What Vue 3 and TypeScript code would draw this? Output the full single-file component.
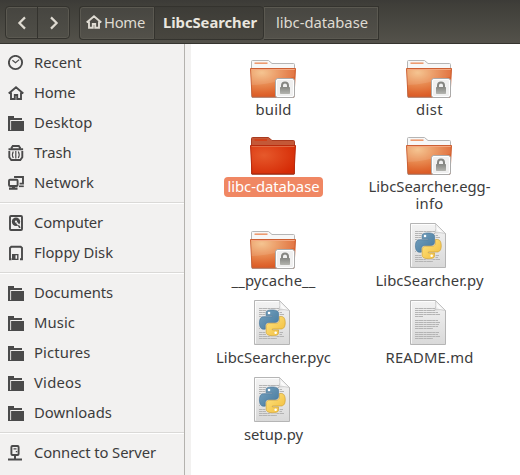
<script setup lang="ts">
type PlaceIcon = 'recent' | 'home' | 'folder' | 'trash' | 'network' | 'disk' | 'floppy' | 'server'

interface Place {
  name: string
  icon: PlaceIcon
  width: number
}

interface LabelLine {
  text: string
  width: number
}

interface FileItem {
  lines: LabelLine[]
  kind: 'folder' | 'python' | 'text'
  locked?: boolean
  selected?: boolean
}

const groups: Place[][] = [
  [
    { name: 'Recent', icon: 'recent', width: 47.5 },
    { name: 'Home', icon: 'home', width: 41.5 },
    { name: 'Desktop', icon: 'folder', width: 58.5 },
    { name: 'Trash', icon: 'trash', width: 37.5 },
    { name: 'Network', icon: 'network', width: 60 },
  ],
  [
    { name: 'Computer', icon: 'disk', width: 69 },
    { name: 'Floppy Disk', icon: 'floppy', width: 79 },
  ],
  [
    { name: 'Documents', icon: 'folder', width: 79 },
    { name: 'Music', icon: 'folder', width: 41 },
    { name: 'Pictures', icon: 'folder', width: 56.5 },
    { name: 'Videos', icon: 'folder', width: 47.5 },
    { name: 'Downloads', icon: 'folder', width: 78 },
  ],
  [{ name: 'Connect to Server', icon: 'server', width: 122 }],
]

const files: FileItem[] = [
  { lines: [{ text: 'build', width: 36 }], kind: 'folder', locked: true },
  { lines: [{ text: 'dist', width: 27 }], kind: 'folder', locked: true },
  { lines: [{ text: 'libc-database', width: 92 }], kind: 'folder', selected: true },
  {
    lines: [
      { text: 'LibcSearcher.egg-', width: 122 },
      { text: 'info', width: 28 },
    ],
    kind: 'folder',
    locked: true,
  },
  { lines: [{ text: '__pycache__', width: 84 }], kind: 'folder', locked: true },
  { lines: [{ text: 'LibcSearcher.py', width: 108 }], kind: 'python' },
  { lines: [{ text: 'LibcSearcher.pyc', width: 115 }], kind: 'python' },
  { lines: [{ text: 'README.md', width: 88 }], kind: 'text' },
  { lines: [{ text: 'setup.py', width: 59 }], kind: 'python' },
]

const textRows = [8.5, 10.5, 12.5, 14.5, 16.5, 20.5, 22.5, 24.5, 26.5, 28.5, 32.5, 34.5, 36.5, 38.5]
const rowEnd = (i: number): number => (i < 2 ? 30 : i === 4 ? 18 : i === 9 || i === 13 ? 28 : 35 - (i % 3))

// Tracks a label so that it occupies the given advance width.
const vFit = {
  mounted(el: HTMLElement, binding: { value: number }) {
    const natural = el.getBoundingClientRect().width
    const count = (el.textContent ?? '').length
    el.style.letterSpacing = `${(binding.value - natural) / count}px`
  },
}

const snake =
  'M14.25.18l.9.2.73.26.59.3.45.32.34.34.25.34.16.33.1.3.04.26.02.2-.01.13V8.5l-.05.63-.13.55-.21.46-.26.38-.3.31-.33.25-.35.19-.35.14-.33.1-.3.07-.26.04-.21.02H8.77l-.69.05-.59.14-.5.22-.41.27-.33.32-.27.35-.2.36-.15.37-.1.35-.07.32-.04.27-.02.21v3.06H3.17l-.21-.03-.28-.07-.32-.12-.35-.18-.36-.26-.36-.36-.35-.46-.32-.59-.28-.73-.21-.88-.14-1.05-.05-1.23.06-1.22.16-1.04.24-.87.32-.71.36-.57.4-.44.42-.33.42-.24.4-.16.36-.1.32-.05.24-.01h.16l.06.01h8.16v-.83H6.18l-.01-2.75-.02-.37.05-.34.11-.31.17-.28.25-.26.31-.23.38-.2.44-.18.51-.15.58-.12.64-.1.71-.06.77-.04.84-.02 1.27.05z'
</script>

<template>
  <div class="window">
    <svg class="defs" width="0" height="0" aria-hidden="true">
      <defs>
        <radialGradient id="front" cx=".25" cy=".15" r="1">
          <stop offset="0" stop-color="#f4be85" />
          <stop offset=".35" stop-color="#ea9359" />
          <stop offset=".7" stop-color="#e06a32" />
          <stop offset="1" stop-color="#d64d1a" />
        </radialGradient>
        <radialGradient id="frontSel" cx=".3" cy=".35" r=".8">
          <stop offset="0" stop-color="#e6592b" />
          <stop offset="1" stop-color="#d52a05" />
        </radialGradient>
        <linearGradient id="paper" x1="0" y1="0" x2="0" y2="1">
          <stop offset="0" stop-color="#f3f3f3" />
          <stop offset="1" stop-color="#d9d9d9" />
        </linearGradient>
        <linearGradient id="curl" x1="0" y1="1" x2="1" y2="0">
          <stop offset="0" stop-color="#cfcfcf" />
          <stop offset=".35" stop-color="#ffffff" />
          <stop offset=".6" stop-color="#dddddd" />
        </linearGradient>
        <linearGradient id="blue" x1="0" y1="0" x2="1" y2="1">
          <stop offset="0" stop-color="#78a3bf" />
          <stop offset="1" stop-color="#44789e" />
        </linearGradient>
        <linearGradient id="yellow" x1="1" y1="1" x2="0" y2="0">
          <stop offset="0" stop-color="#ffe583" />
          <stop offset="1" stop-color="#f1bb38" />
        </linearGradient>
        <linearGradient id="lock" x1="0" y1="0" x2="0" y2="1">
          <stop offset="0" stop-color="#858682" />
          <stop offset="1" stop-color="#b4b5b0" />
        </linearGradient>
      </defs>
    </svg>

    <header class="toolbar">
      <div class="nav">
        <button class="nav-btn" aria-label="Back">
          <svg width="16" height="16" viewBox="0 0 16 16"><path d="M11 2.400 5.400 8l5.600 5.600" /></svg>
        </button>
        <button class="nav-btn" aria-label="Forward">
          <svg width="16" height="16" viewBox="0 0 16 16"><path d="M5 2.400 10.600 8 5 13.600" /></svg>
        </button>
      </div>
      <nav class="path">
        <button class="crumb crumb-home">
          <svg class="crumb-icon" width="16" height="16" viewBox="0 0 16 16">
            <path d="M.7 8.500 8 2.200l7.300 6.300M3 7.500v6.300h3.800v-3.800h2.400v3.800H13V7.500" />
          </svg>
          <span v-fit="41">Home</span>
        </button>
        <button class="crumb crumb-current"><span v-fit="94">LibcSearcher</span></button>
        <button class="crumb crumb-next"><span v-fit="92">libc-database</span></button>
      </nav>
    </header>

    <div class="body">
      <aside class="sidebar">
        <ul v-for="(group, g) in groups" :key="g" class="group">
          <li v-for="place in group" :key="place.name" class="place">
            <svg class="glyph" width="16" height="16" viewBox="0 0 16 16">
              <template v-if="place.icon === 'recent'">
                <circle class="line" cx="7.500" cy="7.500" r="6.600" />
                <path class="thin" d="M4.400 5.200 7.500 7.800 11.200 4.600" />
              </template>
              <path v-else-if="place.icon === 'home'" class="line" d="M.7 8.500 8 2.200l7.300 6.300M3 7.500v6.500h3.800v-4h2.400v4H13V7.500" />
              <template v-else-if="place.icon === 'folder'">
                <path class="fill" d="M0 1h6v2h8v2H2.200v11H0z" />
                <path class="fill" d="M3.100 6H16v10H3.100zM0 15h4v1H0z" />
              </template>
              <template v-else-if="place.icon === 'trash'">
                <path class="line" d="M.5 4.200h14.600M3.200 3.400 4.800 1h6L12.400 3.400M1.300 6v6.200l2 2.800h9l2-2.800V6" />
                <path class="thin" d="M5.300 6.500c-1.200 2-1 4.500 0 6.500M7.800 6v7.400M10.300 6.500c1.200 2 1 4.500 0 6.500" />
              </template>
              <template v-else-if="place.icon === 'network'">
                <path class="line" d="M7 3V2h8v6.600h-3.400" />
                <path class="fill" d="M11 10.500h4.800v1.600H11z" />
                <rect class="line" x="1" y="4.800" width="8.600" height="6.200" rx="1" />
                <path class="fill" d="M4 11h3v1.600h2.500V14.800H1V12.600H4z" />
              </template>
              <template v-else-if="place.icon === 'disk'">
                <rect class="line" x="2" y="1" width="12" height="14" rx="1" />
                <circle class="fill" cx="8" cy="6.700" r="4.200" />
                <circle class="paper" cx="8" cy="6.700" r="1.100" />
                <path class="paper-line" d="m8.600 7.500 3.600 4.500" />
                <path class="fill" d="m9.300 9.800 2.500.9.800 2.200H11z" />
              </template>
              <template v-else-if="place.icon === 'floppy'">
                <path class="line" d="M3.500 14.200H2V3l1.300-1.200h9.400L14 3v11.200h-2" />
                <path class="fill" fill-rule="evenodd" d="M4 9h6.500v6H4zm3.500 1.300v3.500h1.600v-3.500z" />
              </template>
              <template v-else>
                <rect class="line" x="3.400" y="1" width="7.200" height="9" rx="1" />
                <path class="fill" d="M5.500 3.300h3v1.200h-3zM7.800 6H9.300v1.300H7.800zM6 10.500h2v3H14V15.400H0v-1.900h6z" />
              </template>
            </svg>
            <span v-fit="place.width" class="place-name">{{ place.name }}</span>
          </li>
        </ul>
      </aside>

      <main class="files">
        <div v-for="file in files" :key="file.lines[0].text" class="file">
          <svg v-if="file.kind === 'folder'" class="art" width="48" height="48" viewBox="0 0 48 48">
            <g v-if="file.selected">
              <path d="M2.500 45V9.500q0-1 1-1H19.500l3.500 3H44.500q1 0 1 1V45z" fill="#c45837" stroke="#a83b20" />
              <path d="M5.500 10.300h12.500v1.500H5.500z" fill="#d63b12" />
              <path d="M1.500 16.500H46.500L45 44.500H3z" fill="url(#frontSel)" stroke="#b92b0d" />
              <path d="M2.500 17.500h43" stroke="#e06b44" />
              <path d="M3 45.500h42" stroke="#ac5b46" />
            </g>
            <g v-else>
              <path d="M2.500 45V9.500q0-1 1-1H19.500l3.500 3H44.500q1 0 1 1V45z" fill="#f7f7f7" stroke="#b5b5b5" />
              <path d="M5.500 10.400h13v1.600h-13z" fill="#ed9a6f" />
              <path d="M1.500 16.500H46.500L45 44.500H3z" fill="url(#front)" stroke="#cd6033" />
              <path d="M2.300 17.500h43.500" stroke="#f4a880" />
              <path d="M2.500 33C12 33 30 30 45.500 24.500V18H2z" fill="#fff" opacity=".1" />
              <path d="M3 45.500h42" stroke="#b88a78" />
            </g>
            <g v-if="file.locked">
              <rect x="26.500" y="26.500" width="19" height="19" rx="2.500" fill="#ededed" stroke="#aaa" />
              <rect x="27.500" y="27.500" width="17" height="17" rx="1.500" fill="#f0f0f0" stroke="#fff" />
              <path d="M33 36v-2.500a3 3 0 0 1 6 0V36" fill="none" stroke="#858682" stroke-width="2" />
              <rect x="31" y="35" width="10" height="7" rx=".7" fill="url(#lock)" />
            </g>
          </svg>
          <svg v-else class="art" width="48" height="48" viewBox="0 0 48 48">
            <path d="M5.500.5h25L40.500 10.500V44.500h-35z" fill="url(#paper)" stroke="#b5b5b5" />
            <path d="M6.500 43.500v-42H30" fill="none" stroke="#fff" opacity=".8" />
            <g stroke="#b4b4b4" stroke-width="1">
              <path v-for="(y, i) in textRows" :key="y" :d="`M10 ${y}H${rowEnd(i)}`" stroke-dasharray="3 .3 5 .3" />
            </g>
            <path d="M30.500.5Q31.500 6 30 10q5-1 10.500.5z" fill="url(#curl)" stroke="#bdbdbd" stroke-width=".7" />
            <g v-if="file.kind === 'python'" transform="translate(10.5 10) scale(1.07)">
              <g stroke="#e8e8e8" stroke-width="1.600" fill="#e8e8e8">
                <path :d="snake" />
                <path :d="snake" transform="rotate(180 12 12)" />
              </g>
              <path :d="snake" fill="url(#blue)" stroke="#477294" stroke-width=".6" />
              <path :d="snake" transform="rotate(180 12 12)" fill="url(#yellow)" stroke="#c69b34" stroke-width=".6" />
              <circle cx="8.900" cy="2.800" r="1.200" fill="#fff" />
              <circle cx="15.100" cy="21.200" r="1.200" fill="#fff" />
            </g>
          </svg>
          <div class="label" :class="{ selected: file.selected }">
            <div v-for="line in file.lines" :key="line.text" class="line-row">
              <span v-fit="line.width">{{ line.text }}</span>
            </div>
          </div>
        </div>
      </main>
    </div>
  </div>
</template>

<style>
body {
  margin: 0;
  overflow: hidden;
}
</style>

<style scoped>
.window {
  box-sizing: border-box;
  display: flex;
  flex-direction: column;
  width: 520px;
  height: 475px;
  overflow: hidden;
  background: #fff;
  font-family: 'Noto Sans', 'Open Sans', sans-serif;
  font-size: 14.8px;
  color: #3c3c3c;
}
.defs {
  position: absolute;
}
span {
  display: inline-block;
  white-space: pre;
}
.toolbar {
  box-sizing: border-box;
  display: flex;
  flex: none;
  gap: 9px;
  align-items: flex-start;
  height: 44px;
  padding: 6px 0 0 5px;
  background: linear-gradient(#3c3b37, #3f3e39 4px, #53514a 42px);
  border-bottom: 1px solid #35342f;
}
button {
  display: flex;
  align-items: center;
  box-sizing: border-box;
  margin: 0;
  padding: 0;
  border: 0;
  background: none;
  font: inherit;
  color: #dfdbd2;
}
.nav {
  box-sizing: border-box;
  display: flex;
  width: 65px;
  height: 33px;
  border: 1px solid #34332e;
  border-radius: 4px;
  background: linear-gradient(#464540, #504f48);
  box-shadow: inset 0 0 0 1px #5b5951;
}
.nav-btn {
  justify-content: center;
  flex: 1;
}
.nav-btn + .nav-btn {
  border-left: 1px solid #34332e;
}
.nav-btn path {
  fill: none;
  stroke: #dfdbd2;
  stroke-width: 2.2;
}
.path {
  display: flex;
}
.crumb {
  height: 34px;
  border: 1px solid #34332e;
  background: linear-gradient(#474641, #53514a);
  box-shadow: inset 0 0 0 1px #5b5951;
  padding-bottom: 2px;
}
.crumb-home {
  width: 75px;
  padding-left: 6px;
  border-right: 0;
  border-radius: 4px 0 0 4px;
}
.crumb-icon {
  margin-right: 2px;
}
.crumb-icon path {
  fill: none;
  stroke: #dfdbd2;
  stroke-width: 1.9;
}
.crumb-current {
  width: 110px;
  padding-left: 8px;
  border-radius: 0 4px 4px 0;
  background: linear-gradient(#3d3c37, #48463f);
  box-shadow: none;
  font-weight: 700;
  color: #e9e6df;
}
.crumb-next {
  width: 115px;
  padding-left: 12px;
  border-left: 0;
}
.body {
  display: flex;
  flex: 1;
  min-height: 0;
  background: #f2f1f0;
}
.sidebar {
  box-sizing: border-box;
  width: 185px;
  padding-top: 4px;
  border-right: 1px solid #b4b2ae;
}
.group {
  list-style: none;
  margin: 0;
  padding: 0;
}
.group + .group {
  margin-top: 4px;
  padding-top: 5px;
  border-top: 1px solid #dad9d7;
  box-shadow: inset 0 1px #fff;
}
.place {
  display: flex;
  align-items: center;
  height: 30px;
  padding-left: 8px;
  gap: 10px;
}
.place-name {
  padding-bottom: 2px;
}
.glyph {
  flex: none;
}
.line {
  fill: none;
  stroke: #4a4a4a;
  stroke-width: 1.9;
}
.thin {
  fill: none;
  stroke: #4a4a4a;
  stroke-width: 1.2;
}
.fill {
  fill: #4a4a4a;
}
.paper {
  fill: #f2f1f0;
}
.paper-line {
  stroke: #f2f1f0;
  stroke-width: 1.5;
}
.files {
  box-sizing: border-box;
  display: grid;
  grid-template-columns: 156px 156px;
  align-content: start;
  width: 329px;
  margin-left: 6px;
  padding: 8px 0 0 4px;
  background: #fff;
}
.file {
  display: flex;
  flex-direction: column;
  align-items: center;
  padding-bottom: 9px;
}
.art {
  display: block;
}
.label {
  padding: 1px 3px 2px 4px;
  border-radius: 4px;
  text-align: center;
}
.line-row {
  height: 17px;
  line-height: 17px;
}
.selected {
  background: #f08763;
  color: #fff;
}
</style>
